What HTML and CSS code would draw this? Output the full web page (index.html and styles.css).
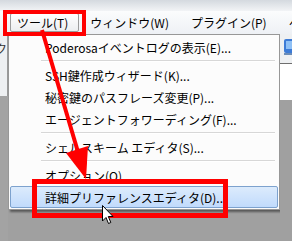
FILE: index.html
```html
<!DOCTYPE html>
<html lang="ja">
<head>
    <meta charset="UTF-8">
    <title>ツール メニュー</title>
    <link rel="stylesheet" href="styles.css">
</head>
<body>

<div class="screen">
    <div class="title-strip"></div>

    <div class="menubar">
        <span class="menu-top first active">ツール(T)</span>
        <span class="menu-top">ウィンドウ(W)</span>
        <span class="menu-top">プラグイン(P)</span>
        <span class="menu-top">ヘルプ(H)</span>
    </div>

    <div class="work">
        <div class="side-left">
            <div class="side-left-top"><span class="ghost">ク</span></div>
        </div>

        <div class="dropdown">
            <div class="item">Poderosaイベントログの表示(E)...</div>
            <div class="sep"></div>
            <div class="item">SSH鍵作成ウィザード(K)...</div>
            <div class="item">秘密鍵のパスフレーズ変更(P)...</div>
            <div class="item">エージェントフォワーディング(F)...</div>
            <div class="sep"></div>
            <div class="item">シェルスキーム エディタ(S)...</div>
            <div class="sep"></div>
            <div class="item">オプション(O)...</div>
            <div class="item hover">詳細プリファレンスエディタ(D)...</div>
        </div>

        <div class="side-right">
            <div class="side-right-top">
                <svg class="side-icon" width="10" height="20" viewBox="0 0 10 20">
                    <rect x="1" y="2" width="12" height="14" rx="2" fill="#3d7bd6"/>
                    <rect x="3" y="4" width="10" height="8" fill="#8fc0f5"/>
                    <rect x="1" y="16" width="12" height="2" fill="#6a8cb8"/>
                </svg>
            </div>
            <div class="side-right-mid"></div>
        </div>
    </div>

    <!-- annotations drawn over the screenshot -->
    <div class="mark mark-menu"></div>
    <div class="mark mark-item"></div>

    <svg class="arrow" width="292" height="241" viewBox="0 0 292 241">
        <line x1="42" y1="30" x2="78" y2="152" stroke="#ff0000" stroke-width="4"/>
        <polygon points="86,179 66,153 88,146" fill="#ff0000"/>
    </svg>

    <svg class="cursor" width="13" height="20" viewBox="0 0 13 20">
        <path d="M0.5 0.5 L0.5 16 L4 12.5 L6.5 18.5 L8.8 17.5 L6.3 11.5 L11 11.5 Z" fill="#fff" stroke="#000" stroke-width="1"/>
    </svg>
</div>

</body>
</html>
```

FILE: styles.css
```css
body {
    margin: 0;
    padding: 0;
    font-family: "Noto Sans CJK JP", "Noto Sans", sans-serif;
    font-size: 12px;
    color: #000;
    background-color: #a0a0a0;
}

.screen {
    position: relative;
    width: 292px;
    height: 241px;
    overflow: hidden;
    background-color: #a0a0a0;
}

.title-strip {
    height: 11px;
    background: linear-gradient(#d4d9df, #f2f4f6);
}

.menubar {
    height: 23px;
    display: flex;
    align-items: center;
    background: linear-gradient(#fbfcfd, #eef1f5);
    white-space: nowrap;
}

.menu-top {
    height: 17px;
    line-height: 17px;
    padding: 0 10px;
    border: 1px solid transparent;
}

.menu-top.first {
    margin-left: 10px;
    padding-left: 6px;
}

.menu-top.active {
    border-color: #9c9c9c;
    background: linear-gradient(#ffffff, #eceef0);
    border-radius: 2px;
}

.work {
    display: flex;
    height: 207px;
}

.side-left {
    width: 8px;
    background-color: #a3a3a3;
}

.side-left-top {
    height: 62px;
    background-color: #eef0f2;
    border-right: 1px solid #9a9a9a;
    overflow: hidden;
}

.ghost {
    display: block;
    margin: 6px 0 0 -5px;
    color: #333;
}

.dropdown {
    width: 272px;
    height: 172px;
    border: 1px solid #979797;
    background-color: #fcfcfc;
    padding: 1px;
    box-sizing: border-box;
    box-shadow: 2px 2px 2px rgba(0, 0, 0, 0.45);
    height: 176px;
}

.item {
    height: 22px;
    line-height: 22px;
    padding-left: 34px;
    border: 1px solid transparent;
    box-sizing: border-box;
    white-space: nowrap;
}

.item.hover {
    background: linear-gradient(#dcebfc, #c1dbfc);
    border-color: #7da2ce;
    border-radius: 2px;
}

.sep {
    height: 6px;
    margin-left: 31px;
    margin-right: 3px;
    background: linear-gradient(transparent 2px, #d7d7d7 2px, #d7d7d7 3px, #ffffff 3px, #ffffff 4px, transparent 4px);
}

.side-right {
    width: 12px;
    margin-left: 0;
    background-color: #a0a0a0;
}

.side-right-top {
    height: 29px;
    background-color: #eef0f2;
    border-bottom: 1px solid #6e6e6e;
    overflow: hidden;
}

.side-icon {
    display: block;
    margin: 3px 0 0 3px;
}

.side-right-mid {
    height: 36px;
    background-color: #ffffff;
}

.mark {
    position: absolute;
    border: 4px solid #ff0000;
    box-sizing: border-box;
}

.mark-menu {
    left: 3px;
    top: 10px;
    width: 83px;
    height: 26px;
}

.mark-item {
    left: 32px;
    top: 179px;
    width: 196px;
    height: 39px;
    border-width: 5px;
}

.arrow {
    position: absolute;
    left: 0;
    top: 0;
}

.cursor {
    position: absolute;
    left: 102px;
    top: 205px;
}
```
